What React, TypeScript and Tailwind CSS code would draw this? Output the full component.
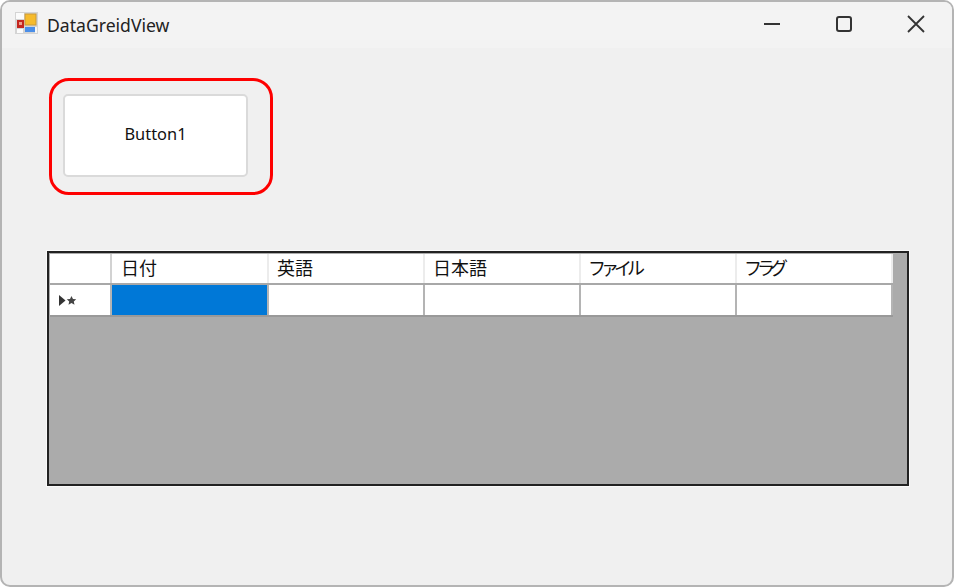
const columns = [
  { name: "日付", kana: false },
  { name: "英語", kana: false },
  { name: "日本語", kana: false },
  { name: "ファイル", kana: true },
  { name: "フラグ", kana: true },
];

const AppIcon = () => (
  <svg width="23" height="22" viewBox="0 0 23 22" className="mb-[4px]">
    <rect width="23" height="22" fill="#d4d4d4" />
    <rect x="1" y="1" width="8" height="6" fill="#fbfbfb" />
    <rect x="2" y="8" width="7" height="8" fill="#c4261f" />
    <rect x="4" y="10" width="3" height="3" fill="#eda08e" />
    <rect x="2" y="17" width="6" height="4" fill="#fbfbfb" />
    <rect x="10" y="2" width="11" height="11" fill="#f6bb2c" stroke="#c99a3a" />
    <rect x="10" y="15" width="10" height="5" fill="#4a8ee8" />
    <rect x="20" y="15" width="2" height="6" fill="#f6f6f6" />
  </svg>
);

export default function App() {
  return (
    <div
      className="flex h-[587px] w-[954px] flex-col overflow-hidden rounded-[10px] border-2 border-[#b4b4b4] bg-[#f0f0f0]"
      style={{ fontFamily: '"Noto Sans", "Noto Sans CJK JP", sans-serif' }}
    >
      {/* title bar */}
      <div className="flex h-[46px] shrink-0 items-center bg-[#f3f3f3] pl-[13px]">
        <AppIcon />
        <span className="ml-[9px] text-[17.6px] text-[#222]">DataGreidView</span>
        <div className="mb-[2px] ml-auto flex items-center text-[#333]">
          <div className="flex w-[72px] justify-center">
            <svg width="16" height="16" viewBox="0 0 16 16">
              <path d="M0 8h16" stroke="#333" strokeWidth="2" />
            </svg>
          </div>
          <div className="flex w-[72px] justify-center">
            <svg width="16" height="16" viewBox="0 0 16 16" fill="none">
              <rect x="1" y="1" width="14" height="14" rx="2" stroke="#333" strokeWidth="2" />
            </svg>
          </div>
          <div className="mr-[1px] flex w-[71px] justify-center">
            <svg width="18" height="18" viewBox="0 0 18 18">
              <path d="M1 1l16 16M17 1L1 17" stroke="#333" strokeWidth="1.8" />
            </svg>
          </div>
        </div>
      </div>

      {/* body */}
      <div className="flex flex-1 flex-col pl-[45px] pr-[43px] pt-[30px]">
        <div className="ml-[2px] flex h-[117px] w-[224px] items-center justify-center rounded-[20px] border-[3px] border-[#fe0000] pb-[2px] pr-[11px]">
          <button className="h-[83px] w-[185px] rounded-[5px] border-2 border-[#dadada] bg-white pb-[3px] text-[16.4px] text-[#111]">
            Button1
          </button>
        </div>

        <div className="mt-[56px] flex h-[235px] w-[862px] flex-col border-2 border-[#222] bg-[#ababab] pl-[1px] pt-[1px] shadow-[0_0_0_1px_#fafafa]">
          <div className="flex h-[29px] w-[843px] bg-white text-[18px] text-[#111]">
            <div className="w-[62px] border-r-2 border-[#d2d2d2]" />
            {columns.map((col, i) => (
              <div
                key={col.name}
                className={
                  col.kana
                    ? "flex w-[156px] items-center border-r-2 border-[#ececec] pb-[2px] pl-[7px] leading-none tracking-[-5px]"
                    : i === 0
                      ? "flex w-[157px] items-center border-r-2 border-[#ececec] pb-[2px] pl-[9px] leading-none"
                      : "flex w-[156px] items-center border-r-2 border-[#ececec] pb-[2px] pl-[8px] leading-none"
                }
              >
                {col.name}
              </div>
            ))}
          </div>
          <div className="flex h-[34px] w-[843px] border-y-2 border-b-[#999999] border-t-[#a8a8a8] bg-white">
            <div className="flex w-[62px] items-center border-r-2 border-[#b4b4b4] pl-[9px]">
              <svg width="18" height="11" viewBox="0 0 18 11">
                <path d="M0 0l6.5 5.5L0 11z" fill="#333" />
                <path
                  d="M12.5 1l1.5 3 3.2.3-2.4 2.2.7 3.2-3-1.6-3 1.6.7-3.2-2.4-2.2 3.2-.3z"
                  fill="#444"
                />
              </svg>
            </div>
            {columns.map((col, i) => (
              <div
                key={col.name}
                className={
                  i === 0
                    ? "w-[157px] border-r-2 border-[#b4b4b4] bg-[#0078d7]"
                    : "w-[156px] border-r-2 border-[#b4b4b4]"
                }
              />
            ))}
          </div>
        </div>
      </div>
    </div>
  );
}
